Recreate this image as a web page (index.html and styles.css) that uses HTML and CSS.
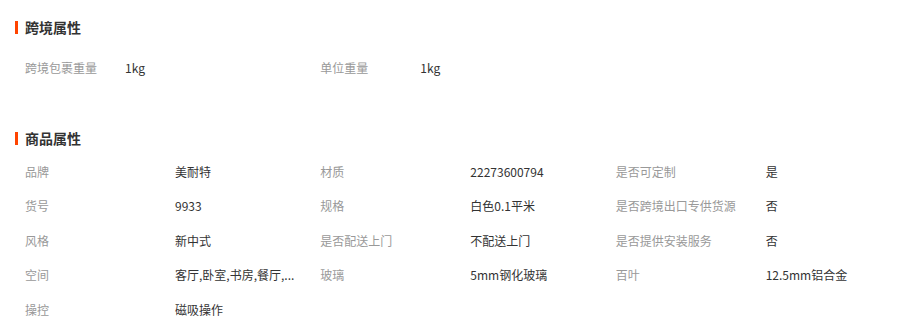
FILE: index.html
```html
<!DOCTYPE html>
<html lang="zh-CN">
<head>
<meta charset="utf-8">
<link rel="stylesheet" href="styles.css">
</head>
<body>
<div class="page">
  <section class="sec sec-cross">
    <h3 class="sec-title">跨境属性</h3>
    <div class="attrs attrs-cross">
      <div class="attr"><span class="k">跨境包裹重量</span><span class="v">1kg</span></div>
      <div class="attr"><span class="k">单位重量</span><span class="v">1kg</span></div>
    </div>
  </section>
  <section class="sec sec-goods">
    <h3 class="sec-title">商品属性</h3>
    <div class="attrs attrs-goods">
      <div class="attr"><span class="k">品牌</span><span class="v">美耐特</span></div>
      <div class="attr"><span class="k">材质</span><span class="v">22273600794</span></div>
      <div class="attr"><span class="k">是否可定制</span><span class="v">是</span></div>
      <div class="attr"><span class="k">货号</span><span class="v">9933</span></div>
      <div class="attr"><span class="k">规格</span><span class="v">白色0.1平米</span></div>
      <div class="attr"><span class="k">是否跨境出口专供货源</span><span class="v">否</span></div>
      <div class="attr"><span class="k">风格</span><span class="v">新中式</span></div>
      <div class="attr"><span class="k">是否配送上门</span><span class="v">不配送上门</span></div>
      <div class="attr"><span class="k">是否提供安装服务</span><span class="v">否</span></div>
      <div class="attr"><span class="k">空间</span><span class="v">客厅,卧室,书房,餐厅,...</span></div>
      <div class="attr"><span class="k">玻璃</span><span class="v">5mm钢化玻璃</span></div>
      <div class="attr"><span class="k">百叶</span><span class="v">12.5mm铝合金</span></div>
      <div class="attr"><span class="k">操控</span><span class="v">磁吸操作</span></div>
    </div>
  </section>
</div>
</body>
</html>
```
FILE: styles.css
```css
html, body {
  margin: 0;
  padding: 0;
  background: #fff;
}
body {
  font-family: "Noto Sans CJK SC", "Liberation Sans", sans-serif;
  font-size: 12px;
  color: #333;
}
.page {
  padding: 17px 7px 0 25px;
}
.sec-title {
  position: relative;
  margin: 0;
  height: 20px;
  line-height: 20px;
  font-size: 14px;
  font-weight: bold;
  color: #333;
}
.sec-title::before {
  content: "";
  position: absolute;
  left: -10px;
  top: 4px;
  width: 3px;
  height: 13px;
  background: #ff4400;
}
.attrs {
  display: grid;
  grid-template-columns: repeat(3, 1fr);
}
.attr {
  display: flex;
  height: 34.5px;
  line-height: 34.5px;
  padding-right: 25px;
  min-width: 0;
}
.k {
  flex: none;
  width: 150px;
  color: #999;
  white-space: nowrap;
}
.v {
  flex: 0 1 120px;
  min-width: 0;
  color: #333;
  white-space: nowrap;
}
.attrs-cross {
  margin-top: 14px;
}
.attrs-cross .k {
  width: 100px;
}
.sec-goods {
  margin-top: 42px;
}
.attrs-goods {
  margin-top: 7px;
}
```
